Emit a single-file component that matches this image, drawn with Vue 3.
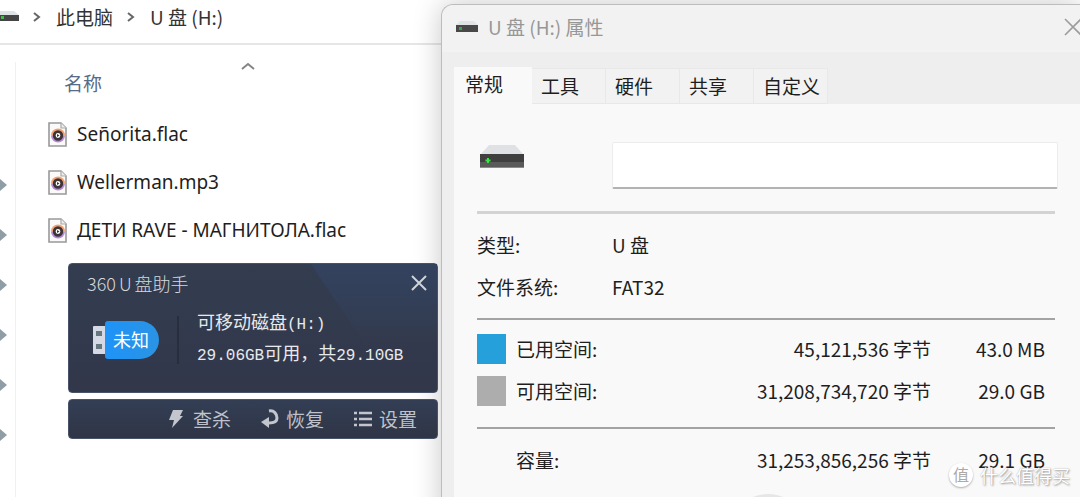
<script setup>
import { ref } from 'vue'

const files = ['Señorita.flac', 'Wellerman.mp3', 'ДЕТИ RAVE - МАГНИТОЛА.flac']
const tabs = ['常规', '工具', '硬件', '共享', '自定义']
const active = ref('常规')
const label = ref('')
const usage = [
  { kind: 'used', name: '已用空间:', bytes: '45,121,536 字节', size: '43.0 MB' },
  { kind: 'free', name: '可用空间:', bytes: '31,208,734,720 字节', size: '29.0 GB' }
]
</script>

<template>
  <div class="desktop">
    <main class="explorer">
      <nav class="crumbs" aria-label="路径">
        <svg class="crumb-drive" width="19" height="12" viewBox="0 0 19 12">
          <path d="M0 0H14L19 4H0Z" fill="#dfe3e6" />
          <rect y="4" width="19" height="6" fill="#454545" />
          <rect x="1" y="5" width="3" height="3" fill="#35c23c" />
        </svg>
        <svg class="crumb-sep" width="8" height="12" viewBox="0 0 8 12"><path d="M1 2L6 6L1 10" /></svg>
        <a href="#">此电脑</a>
        <svg class="crumb-sep" width="8" height="12" viewBox="0 0 8 12"><path d="M1 2L6 6L1 10" /></svg>
        <a href="#">U 盘 (H:)</a>
      </nav>
      <div class="content">
        <aside class="pins">
          <svg v-for="n in 6" :key="n" width="7" height="14" viewBox="0 0 7 14">
            <path d="M0 1L7 7L0 13Z" fill="#8f9da5" />
          </svg>
        </aside>
        <section class="listing">
          <div class="column-head">
            <span>名称</span>
            <svg width="14" height="8" viewBox="0 0 14 8"><path d="M1 7L7 2L13 7" fill="none" stroke="#858585" stroke-width="2" /></svg>
          </div>
          <ul class="files">
            <li v-for="f in files" :key="f">
              <a href="#">
                <svg width="19" height="25" viewBox="0 0 19 25">
                  <path d="M1 1H13L18 6V24H1Z" fill="#fafafa" stroke="#999" stroke-width="1.6" />
                  <path d="M13 1V6H18" fill="#eee" stroke="#aaa" stroke-width="1.2" />
                  <path d="M3 13.500A7 7 0 0 1 17 13.500Z" fill="#f2a06b" />
                  <path d="M3 13.500A7 7 0 0 0 17 13.500Z" fill="#b58ad0" />
                  <circle cx="10" cy="13.500" r="3.800" fill="#fff" stroke="#3c3438" stroke-width="2.800" />
                  <path d="M9 12L11.500 13.500L9 15Z" fill="#3c3438" />
                </svg>
                <span>{{ f }}</span>
              </a>
            </li>
          </ul>
          <div class="helper">
            <section class="helper-card">
              <header>
                <h2><span>360</span><span>U</span><span>盘助手</span></h2>
                <button type="button" class="helper-close" aria-label="关闭">
                  <svg width="16" height="16" viewBox="0 0 16 16"><path d="M1 1L15 15M15 1L1 15" stroke="#cfd2d8" stroke-width="2" /></svg>
                </button>
              </header>
              <div class="helper-body">
                <svg class="stick" width="13" height="30" viewBox="0 0 13 30">
                  <rect x="1" y="1" width="13" height="28" rx="1" fill="#d5d9e5" />
                  <rect x="4" y="6" width="6" height="5" fill="#67757c" />
                  <rect x="4" y="19" width="6" height="5" fill="#67757c" />
                </svg>
                <span class="badge">未知</span>
                <div class="helper-text">
                  <p>可移动磁盘<span class="mono">(H:)</span></p>
                  <p><span class="mono">29.06GB</span>可用，共<span class="mono">29.10GB</span></p>
                </div>
              </div>
            </section>
            <div class="helper-bar">
              <button type="button">
                <svg width="18" height="20" viewBox="0 0 18 20"><path d="M5 1H15L12 7H15L4 19L6 11H1Z" fill="#c3c6cd" /></svg>
                查杀
              </button>
              <button type="button">
                <svg width="18" height="20" viewBox="0 0 18 20">
                  <path d="M8 2C13 1 16 5 16 9C16 13 13 14 8 14" fill="none" stroke="#c3c6cd" stroke-width="3" />
                  <path d="M0 13L8 8V19Z" fill="#c3c6cd" />
                </svg>
                恢复
              </button>
              <button type="button">
                <svg width="18" height="20" viewBox="0 0 18 20"><path d="M0 4H3M5 4H18M0 10H3M5 10H18M0 16H3M5 16H18" stroke="#c3c6cd" stroke-width="2.500" /></svg>
                设置
              </button>
            </div>
          </div>
        </section>
      </div>
    </main>

    <section class="dialog" role="dialog" aria-label="U 盘 (H:) 属性">
      <header class="titlebar">
        <svg width="22" height="13" viewBox="0 0 22 13">
          <path d="M4 0H18L22 4H0Z" fill="#e1e4e6" />
          <rect y="4" width="22" height="7" fill="#484848" />
          <rect x="3" y="6" width="3" height="3" fill="#35a83c" />
        </svg>
        <h1>U 盘 (H:) 属性</h1>
        <button type="button" class="close" aria-label="关闭">
          <svg width="18" height="18" viewBox="0 0 18 18"><path d="M1 1L17 17M17 1L1 17" stroke="#9c9c9c" stroke-width="1.600" /></svg>
        </button>
      </header>
      <div class="tabs" role="tablist">
        <button
          v-for="t in tabs"
          :key="t"
          type="button"
          role="tab"
          :aria-selected="active === t"
          :class="{ active: active === t }"
          @click="active = t"
        >{{ t }}</button>
      </div>
      <div class="panel">
        <div class="identity">
          <svg width="44" height="25" viewBox="0 0 44 25">
            <path d="M9 1H35L43 10H1Z" fill="#dfe1e5" />
            <rect y="10" width="44" height="14" fill="#3f3f3f" />
            <rect y="18" width="44" height="6" fill="#5a5a5a" />
            <rect y="23" width="44" height="1" fill="#8c8c8c" />
            <path d="M8 14V19M5.500 16.500H10.500" stroke="#3fe046" stroke-width="2" />
          </svg>
          <input v-model="label" type="text" aria-label="卷标" />
        </div>
        <dl class="facts">
          <dt>类型:</dt>
          <dd>U 盘</dd>
          <dt>文件系统:</dt>
          <dd>FAT32</dd>
        </dl>
        <table class="usage">
          <tbody>
            <tr v-for="u in usage" :key="u.kind">
              <td class="swatch-cell"><span class="swatch" :class="u.kind"></span></td>
              <th scope="row">{{ u.name }}</th>
              <td class="bytes">{{ u.bytes }}</td>
              <td class="size">{{ u.size }}</td>
            </tr>
          </tbody>
          <tfoot>
            <tr>
              <td class="swatch-cell"></td>
              <th scope="row">容量:</th>
              <td class="bytes">31,253,856,256 字节</td>
              <td class="size">29.1 GB</td>
            </tr>
          </tfoot>
        </table>
        <div class="pie"></div>
      </div>
    </section>

    <div class="watermark"><span class="mark">值</span><span>什么值得买</span></div>
  </div>
</template>

<style>
body {
  margin: 0;
  background: #fff;
}
</style>

<style scoped>
* {
  box-sizing: border-box;
}
.desktop {
  position: relative;
  display: grid;
  grid-template-columns: 49fr 71fr;
  height: 100vh;
  overflow: hidden;
  font: 19px/28px "Noto Sans CJK SC", sans-serif;
  color: #1e1e1e;
}
button {
  border: 0;
  padding: 0;
  background: none;
  font: inherit;
  color: inherit;
}
a {
  color: inherit;
  text-decoration: none;
}
svg {
  display: block;
  flex: none;
}
.explorer {
  display: flex;
  flex-direction: column;
  min-width: 0;
}
.crumbs {
  display: flex;
  align-items: center;
  height: 45px;
  padding-bottom: 10px;
  border-bottom: 2px solid #e6e6e6;
  color: #333;
}
.crumb-sep {
  margin: 0 15px 0 14px;
}
.crumb-sep path {
  fill: none;
  stroke: #666;
  stroke-width: 2;
}
.content {
  flex: 1;
  display: flex;
  padding-top: 17px;
}
.pins {
  display: flex;
  flex-direction: column;
  gap: 36px;
  width: 16px;
  padding-top: 116px;
  border-right: 1px solid #f0f0f0;
}
.listing {
  flex: 1;
  min-width: 0;
}
.column-head {
  display: flex;
  align-items: flex-start;
  height: 48px;
  padding-left: 48px;
  color: #566b86;
}
.column-head span {
  width: 177px;
  padding-top: 7px;
}
.files {
  margin: 0;
  padding: 0 0 0 32px;
  list-style: none;
  font-family: "Noto Sans", sans-serif;
}
.files a {
  display: flex;
  align-items: center;
  gap: 10px;
  height: 48px;
  white-space: nowrap;
}
.helper {
  position: relative;
  z-index: 1;
  display: flex;
  flex-direction: column;
  gap: 6px;
  margin: 9px 3px 0 52px;
  color: #e8e9ec;
}
.helper-card {
  position: relative;
  height: 130px;
  border-radius: 4px;
  border: 1px solid #48536a;
  background: linear-gradient(#333d50, #32374a);
}
.helper-card::before {
  content: "";
  position: absolute;
  top: 0;
  right: 0;
  width: 126px;
  height: 80px;
  background: linear-gradient(#33425f, transparent);
  clip-path: polygon(0 0, 100% 0, 100% 100%, 54px 100%);
}
.helper-card header {
  position: relative;
  display: flex;
  align-items: center;
  justify-content: space-between;
  padding: 5px 10px 0 18px;
}
.helper-card h2 {
  display: flex;
  gap: 3px;
  margin: 0;
  font-size: 18px;
  font-weight: 300;
  color: #d6d8dc;
}
.helper-body {
  display: flex;
  align-items: center;
  padding: 9px 0 0 23px;
}
.badge {
  width: 54px;
  height: 38px;
  padding-left: 8px;
  border-radius: 3px 19px 19px 3px;
  background: linear-gradient(90deg, #1e93f8, #2b93e4);
  font-size: 18px;
  line-height: 37px;
  color: #fff;
}
.helper-text {
  margin-left: 18px;
  padding: 0 0 6px 20px;
  position: relative;
  font-size: 18px;
  line-height: 31px;
  white-space: nowrap;
}
.helper-text::before {
  content: "";
  position: absolute;
  left: 0;
  top: 10px;
  bottom: 10px;
  width: 2px;
  background: #292e3e;
}
.helper-text p {
  height: 31px;
  margin: 0;
}
.mono {
  font-family: "Liberation Mono", monospace;
  font-size: 16px;
  line-height: 16px;
}
.helper-bar {
  display: flex;
  justify-content: flex-end;
  align-items: center;
  gap: 30px;
  height: 40px;
  padding-right: 20px;
  border-radius: 4px;
  border: 1px solid #48536a;
  background: linear-gradient(#333e55, #2f3545);
  color: #bfc2ca;
}
.helper-bar button {
  display: flex;
  align-items: center;
  gap: 7px;
}
.dialog {
  display: flex;
  flex-direction: column;
  min-width: 0;
  margin-top: 4px;
  border: solid #bdbdbd;
  border-width: 1px 0 0 1px;
  border-radius: 12px 0 0 0;
  background: #eee;
  box-shadow: 0 0 28px rgba(0, 0, 0, 0.22);
}
.titlebar {
  display: flex;
  align-items: center;
  height: 47px;
  padding: 0 0 3px 14px;
  border-radius: 12px 0 0 0;
  background: #f2f2f2;
}
.titlebar h1 {
  margin: 0 auto 0 10px;
  font-size: 19px;
  font-weight: 400;
  color: #979797;
}
.close {
  margin: 0 -2px 0 0;
}
.tabs {
  display: flex;
  align-items: flex-end;
  height: 52px;
  padding-left: 12px;
}
.tabs button {
  height: 36px;
  padding: 0 6px 0 9px;
  min-width: 74px;
  border: 1px solid #e8e8e8;
  border-left-width: 0;
  background: #f2f2f2;
  text-align: left;
}
.tabs .active {
  height: 37px;
  min-width: 78px;
  padding: 0 0 4px 11px;
  border-color: #f9f9f9;
  background: #f9f9f9;
}
.panel {
  flex: 1;
  margin-left: 12px;
  padding: 38px 22px 0 23px;
  background: #f9f9f9;
}
.identity {
  display: flex;
  align-items: flex-start;
  gap: 88px;
  padding-left: 3px;
}
.identity svg {
  margin-top: 2px;
}
.identity input {
  flex: 1;
  min-width: 0;
  height: 47px;
  padding: 0 8px;
  border: 1px solid #ececec;
  border-bottom: 2px solid #b2b2b2;
  border-radius: 2px;
  outline: 0;
  background: #fff;
  font: inherit;
}
.facts {
  display: grid;
  grid-template-columns: 135px 1fr;
  margin: 22px 3px 0 0;
  padding: 10px 0 10px;
  border: solid #a3a3a3;
  border-width: 3px 0 2px;
  border-top-color: #d3d3d3;
  line-height: 42px;
}
.facts dd {
  margin: 0;
}
.usage {
  width: calc(100% - 3px);
  border-spacing: 0;
}
.usage td,
.usage th {
  box-sizing: content-box;
  height: 42px;
  padding: 0;
  font-weight: 400;
  text-align: left;
  white-space: nowrap;
}
.usage tbody tr:first-child > * {
  padding-top: 8px;
}
.usage tbody tr:last-child > * {
  padding-bottom: 15px;
}
.usage tfoot tr > * {
  padding-top: 10px;
  border-top: 2px solid #a3a3a3;
}
.usage .swatch-cell {
  width: 39px;
}
.swatch {
  display: block;
  width: 29px;
  height: 30px;
}
.used {
  background: #26a0da;
}
.free {
  background: #adadad;
}
.usage .bytes {
  text-align: right;
}
.usage .size {
  width: 114px;
  padding-right: 10px;
  text-align: right;
}
.pie {
  width: 50px;
  height: 30px;
  margin: 13px auto 0;
  border-radius: 50%;
  background: #e6e6e6;
}
.watermark {
  position: absolute;
  right: 10px;
  bottom: 8px;
  display: flex;
  align-items: center;
  gap: 7px;
  font-size: 18px;
  color: #fff;
  text-shadow: 1px 1px 2px #999, 0 0 1px #aaa;
}
.mark {
  width: 24px;
  height: 24px;
  border-radius: 50%;
  background: #fff;
  box-shadow: 0 1px 2px #aaa;
  font-size: 16px;
  line-height: 23px;
  text-align: center;
  color: #aaa;
  text-shadow: none;
}
</style>
